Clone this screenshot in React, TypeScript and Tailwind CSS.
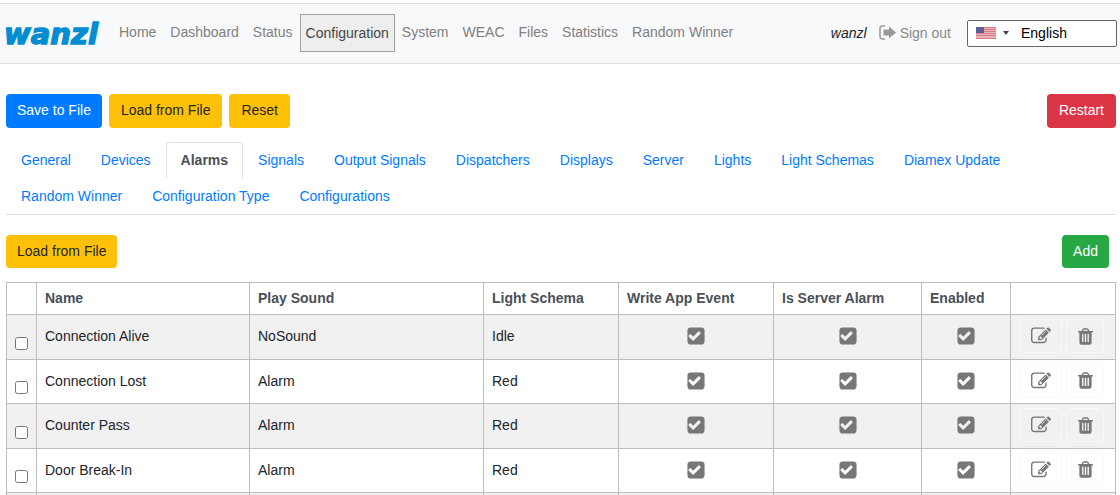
const navItems = [
  "Home",
  "Dashboard",
  "Status",
  "Configuration",
  "System",
  "WEAC",
  "Files",
  "Statistics",
  "Random Winner",
];

const tabs = [
  "General",
  "Devices",
  "Alarms",
  "Signals",
  "Output Signals",
  "Dispatchers",
  "Displays",
  "Server",
  "Lights",
  "Light Schemas",
  "Diamex Update",
  "Random Winner",
  "Configuration Type",
  "Configurations",
];

const alarms = [
  { name: "Connection Alive", sound: "NoSound", schema: "Idle" },
  { name: "Connection Lost", sound: "Alarm", schema: "Red" },
  { name: "Counter Pass", sound: "Alarm", schema: "Red" },
  { name: "Door Break-In", sound: "Alarm", schema: "Red" },
];

const CheckIcon = () => (
  <svg
    viewBox="0 0 1792 1792"
    className="mx-auto size-5 fill-[#777]"
    role="img"
    aria-label="Yes"
  >
    <path d="M685 1299l614-614q19-19 19-45t-19-45l-102-102q-19-19-45-19t-45 19l-467 467-211-211q-19-19-45-19t-45 19l-102 102q-19 19-19 45t19 45l358 358q19 19 45 19t45-19zm979-883v960q0 119-84.5 203.5t-203.5 84.5h-960q-119 0-203.5-84.5t-84.5-203.5v-960q0-119 84.5-203.5t203.5-84.5h960q119 0 203.5 84.5t84.5 203.5z" />
  </svg>
);

const EditIcon = () => (
  <svg viewBox="0 0 1792 1792" className="size-5 fill-[#777]">
    <path d="M888 1184l116-116-152-152-116 116v56h96v96h56zm440-720q-16-16-33 1l-350 350q-17 17-1 33t33-1l350-350q17-17 1-33zm80 594v190q0 119-84.5 203.5t-203.5 84.5h-832q-119 0-203.5-84.5t-84.5-203.5v-832q0-119 84.5-203.5t203.5-84.5h832q63 0 117 25 15 7 18 23 3 17-9 29l-49 49q-14 14-32 8-23-6-45-6h-832q-66 0-113 47t-47 113v832q0 66 47 113t113 47h832q66 0 113-47t47-113v-126q0-13 9-22l64-64q15-15 35-7t20 29zm-96-738l288 288-672 672h-288v-288zm444 132l-92 92-288-288 92-92q28-28 68-28t68 28l152 152q28 28 28 68t-28 68z" />
  </svg>
);

const TrashIcon = () => (
  <svg viewBox="0 0 1792 1792" className="size-[19px] fill-[#777]">
    <path d="M704 1376v-704q0-14-9-23t-23-9h-64q-14 0-23 9t-9 23v704q0 14 9 23t23 9h64q14 0 23-9t9-23zm256 0v-704q0-14-9-23t-23-9h-64q-14 0-23 9t-9 23v704q0 14 9 23t23 9h64q14 0 23-9t9-23zm256 0v-704q0-14-9-23t-23-9h-64q-14 0-23 9t-9 23v704q0 14 9 23t23 9h64q14 0 23-9t9-23zm-544-992h448l-48-117q-7-9-17-11h-317q-10 2-17 11zm928 32v64q0 14-9 23t-23 9h-96v948q0 83-47 143.5t-113 60.5h-832q-66 0-113-58.5t-47-141.5v-952h-96q-14 0-23-9t-9-23v-64q0-14 9-23t23-9h309l70-167q15-37 54-63t79-26h320q40 0 79 26t54 63l70 167h309q14 0 23 9t9 23z" />
  </svg>
);

const SignOutIcon = () => (
  <svg width="17" height="15" viewBox="0 0 17 15">
    <path
      d="M6 1H3.5A2.5 2.5 0 0 0 1 3.5v8A2.5 2.5 0 0 0 3.5 14H6"
      fill="none"
      stroke="#999"
      strokeWidth="1.6"
    />
    <path d="M4.5 4.5H10V1.5L17 7.5L10 13.5V10.5H4.5z" fill="#999" />
  </svg>
);

const Logo = () => (
  <svg width="98" height="24" viewBox="0 0 98 24" className="overflow-visible">
    <text
      x="-1"
      y="22"
      fontFamily="DejaVu Sans, sans-serif"
      fontSize="29"
      fontWeight="700"
      fontStyle="italic"
      fill="#008dd2"
      stroke="#008dd2"
      strokeWidth="1.4"
    >
      wanzl
    </text>
  </svg>
);

const UsFlag = () => (
  <svg width="20" height="12" viewBox="0 0 20 12">
    <rect width="20" height="12" fill="#e9b4b9" />
    {[0, 2, 4, 6, 8, 11].map((y) => (
      <rect key={y} y={y} width="20" height="1" fill="#d97c84" />
    ))}
    <rect width="8" height="6" fill="#5f5f92" />
  </svg>
);

const Header = () => (
  <header className="mt-[3px] flex h-[61px] items-center border-y border-[#dcdfe2] bg-[#f8f9fa] pr-[3px] pl-[5px]">
    <a href="#" aria-label="wanzl" className="mr-[9px]">
      <Logo />
    </a>
    <nav className="flex items-center pb-0.5">
      {navItems.map((item) =>
        item === "Configuration" ? (
          <a
            key={item}
            href="#"
            className="flex h-[38px] items-center border border-[#a0a0a0] bg-[#eee] px-[5px] text-[#444]"
          >
            {item}
          </a>
        ) : (
          <a key={item} href="#" className="px-[7px] pb-0.5 text-[#808080]">
            {item}
          </a>
        )
      )}
    </nav>
    <div className="ml-auto flex items-center">
      <span className="pb-0.5 text-[#212529] italic">wanzl</span>
      <a href="#" className="ml-3 flex items-center gap-1 pb-0.5 text-[#888]">
        <SignOutIcon />
        Sign out
      </a>
      <button className="ml-4 flex h-[27px] w-[150px] items-center rounded-xs border border-[#666] bg-white px-2 pb-0.5 text-black">
        <UsFlag />
        <svg width="6" height="4" viewBox="0 0 6 4" className="ml-[7px]">
          <path d="M0 0h6L3 4z" fill="#444" />
        </svg>
        <span className="ml-3">English</span>
      </button>
    </div>
  </header>
);

const App = () => {
  return (
    <div className="h-screen overflow-hidden bg-white font-['Liberation_Sans',Arial,sans-serif] text-sm text-[#212529]">
      <Header />
      <main className="pr-1 pl-[6px]">
        <div className="mt-[30px] flex gap-[7px]">
          <button className="h-[34px] rounded bg-[#007bff] px-[11px] pb-0.5 text-white">
            Save to File
          </button>
          <button className="h-[34px] rounded bg-[#ffc107] px-3 pb-0.5">
            Load from File
          </button>
          <button className="h-[34px] rounded bg-[#ffc107] px-3 pb-0.5">
            Reset
          </button>
          <button className="ml-auto h-[34px] rounded bg-[#dc3545] px-3 pb-0.5 text-white">
            Restart
          </button>
        </div>
        <div
          role="tablist"
          className="mt-[14px] flex flex-wrap border-b border-[#dee2e6]"
        >
          {tabs.map((tab) =>
            tab === "Alarms" ? (
              <button
                key={tab}
                role="tab"
                aria-selected="true"
                className="h-9 rounded-t border border-b-white border-[#dee2e6] px-[14px] font-bold text-[#495057]"
              >
                {tab}
              </button>
            ) : (
              <button
                key={tab}
                role="tab"
                aria-selected="false"
                className="h-9 border border-transparent px-[14px] text-[#007bff]"
              >
                {tab}
              </button>
            )
          )}
        </div>
        <div className="mt-5 flex justify-between pr-[7px]">
          <button className="h-[33px] rounded bg-[#ffc107] px-[11px] pb-0.5">
            Load from File
          </button>
          <button className="h-[33px] rounded bg-[#28a745] px-[11px] pb-0.5 text-white">
            Add
          </button>
        </div>
        <table className="mt-[14px] w-full table-fixed border-collapse [&_td]:border [&_td]:border-[#bdbdbd] [&_th]:border [&_th]:border-[#bdbdbd]">
          <colgroup>
            <col className="w-[30px]" />
            <col className="w-[213px]" />
            <col className="w-[234px]" />
            <col className="w-[135px]" />
            <col className="w-[155px]" />
            <col className="w-[148px]" />
            <col className="w-[89px]" />
            <col className="w-[105px]" />
          </colgroup>
          <thead>
            <tr className="h-8 text-left text-[#495057] [&>th]:px-2 [&>th]:pb-0.5">
              <th></th>
              <th>Name</th>
              <th>Play Sound</th>
              <th>Light Schema</th>
              <th>Write App Event</th>
              <th>Is Server Alarm</th>
              <th>Enabled</th>
              <th></th>
            </tr>
          </thead>
          <tbody>
            {alarms.map((alarm) => (
              <tr
                key={alarm.name}
                className="odd:h-[45px] odd:bg-[#f1f1f1] even:h-11 [&>td]:px-2 [&>td]:pb-0.5"
              >
                <td className="align-bottom">
                  <input
                    type="checkbox"
                    aria-label={alarm.name}
                    className="mb-[7px] block size-[13px]"
                  />
                </td>
                <td>{alarm.name}</td>
                <td>{alarm.sound}</td>
                <td>{alarm.schema}</td>
                <td>
                  <CheckIcon />
                </td>
                <td>
                  <CheckIcon />
                </td>
                <td>
                  <CheckIcon />
                </td>
                <td>
                  <div className="flex gap-1 pl-px">
                    <button
                      aria-label="Edit"
                      className="flex h-[34px] w-[42px] items-center justify-center rounded border border-[#f8f9fa]"
                    >
                      <EditIcon />
                    </button>
                    <button
                      aria-label="Delete"
                      className="flex h-[34px] w-[38px] items-center justify-center rounded border border-[#f8f9fa]"
                    >
                      <TrashIcon />
                    </button>
                  </div>
                </td>
              </tr>
            ))}
            <tr className="h-11 bg-[#f1f1f1]">
              <td></td>
              <td></td>
              <td></td>
              <td></td>
              <td></td>
              <td></td>
              <td></td>
              <td></td>
            </tr>
          </tbody>
        </table>
      </main>
    </div>
  );
};

export default App;
